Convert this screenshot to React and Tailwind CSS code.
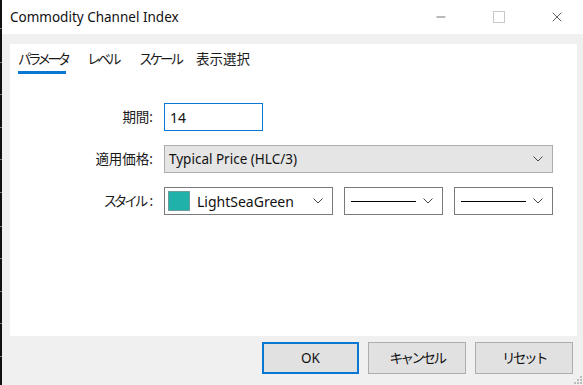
import { X, Minus } from 'lucide-react';

const font = "font-['Noto_Sans','Noto_Sans_CJK_JP',sans-serif]";

function Chevron() {
  return (
    <svg width="10" height="6" viewBox="0 0 10 6" className="shrink-0">
      <path d="M0.5 0.5 L5 5 L9.5 0.5" fill="none" stroke="#444" strokeWidth="1" />
    </svg>
  );
}

function Select({ width, gray, children }) {
  return (
    <div
      className={`h-[28px] ${width} border flex items-center justify-between pr-[9px] ${
        gray ? 'bg-[#e5e5e5] border-[#adadad]' : 'bg-white border-[#7a7a7a]'
      }`}
    >
      <div className="flex items-center min-w-0">{children}</div>
      <Chevron />
    </div>
  );
}

function LineSample() {
  return <div className="ml-[6px] w-[65px] h-px bg-black" />;
}

function Label({ children }) {
  return <div className="text-[13.5px] text-[#1a1a1a] text-right w-[145px] pr-[2px] shrink-0">{children}</div>;
}

const ticks = [28, 62, 94, 127, 159, 192, 226, 258, 291, 323, 356];

export default function App() {
  return (
    <div className={`w-[583px] h-[385px] flex bg-[#f0f0f0] overflow-hidden relative ${font}`}>
      {/* dark edge of the chart behind */}
      <div className="w-[2px] h-full bg-[#111] relative shrink-0">
        {ticks.map(t => (
          <div key={t} className="absolute left-0 w-[2px] h-px bg-[#777]" style={{ top: t }} />
        ))}
      </div>

      <div className="flex-1 flex flex-col">
        {/* Title bar */}
        <div className="h-[34px] bg-white flex items-center shrink-0">
          <div className="pl-[8px] text-[13.5px] text-[#111] flex-1">Commodity Channel Index</div>
          <div className="flex items-center">
            <div className="w-[46px] flex justify-center">
              <Minus className="w-[14px] h-[14px]" strokeWidth={1} color="#111" />
            </div>
            <div className="w-[46px] ml-[12px] flex justify-center">
              <div className="w-[12px] h-[12px] border border-[#c8c8c8]" />
            </div>
            <div className="w-[46px] ml-[12px] mr-[3px] flex justify-center">
              <X className="w-[16px] h-[16px]" strokeWidth={1} color="#111" />
            </div>
          </div>
        </div>

        {/* Body */}
        <div className="flex-1 flex flex-col pt-[10px] pl-[8px] pr-[6px]">
          <div className="h-[292px] bg-white flex flex-col">
            {/* Tabs */}
            <div className="flex pl-[8px] pt-[5px] text-[13.5px] text-[#1a1a1a]">
              <div className="w-[69px] flex flex-col items-start">
                <div className="h-[20px] leading-[20px] tracking-[-3.5px]">パラメータ</div>
                <div className="mt-[2px] w-[48px] h-[3px] bg-[#0a78d2]" />
              </div>
              <div className="w-[52px] h-[20px] leading-[20px] tracking-[-3px]">レベル</div>
              <div className="w-[57px] h-[20px] leading-[20px] tracking-[-3px]">スケール</div>
              <div className="h-[20px] leading-[20px]">表示選択</div>
            </div>

            {/* Form */}
            <div className="flex flex-col gap-[14px] mt-[29px]">
              <div className="flex items-center gap-[9px]">
                <Label>期間:</Label>
                <div className="h-[28px] w-[99px] border border-[#0a78d2] bg-white flex items-center pl-[5px] text-[14px] text-[#111]">
                  14
                </div>
              </div>

              <div className="flex items-center gap-[9px]">
                <Label>適用価格:</Label>
                <Select width="w-[389px]" gray>
                  <span className="pl-[4px] text-[13.5px] text-[#111]">Typical Price (HLC/3)</span>
                </Select>
              </div>

              <div className="flex items-center gap-[9px]">
                <Label>
                  <span className="tracking-[-3px] pr-[4px]">スタイル</span>:
                </Label>
                <div className="flex gap-[11px]">
                  <Select width="w-[169px]">
                    <div className="ml-[3px] w-[22px] h-[20px] bg-[#20b2aa] border border-[#6d9c99]" />
                    <span className="ml-[7px] text-[14px] text-[#111]">LightSeaGreen</span>
                  </Select>
                  <Select width="w-[99px]">
                    <LineSample />
                  </Select>
                  <Select width="w-[99px]">
                    <LineSample />
                  </Select>
                </div>
              </div>
            </div>
          </div>

          {/* Buttons */}
          <div className="flex justify-end gap-[9px] pt-[6px] pr-[4px] text-[13.5px] text-[#111]">
            <button className="w-[97px] h-[32px] bg-[#e1e1e1] border-2 border-[#0a78d2]">OK</button>
            <button className="w-[98px] h-[32px] bg-[#e1e1e1] border border-[#adadad] tracking-[-2.5px]">キャンセル</button>
            <button className="w-[98px] h-[32px] bg-[#e1e1e1] border border-[#adadad] tracking-[-2.5px]">リセット</button>
          </div>
        </div>
      </div>

      {/* resize grip */}
      <div className="absolute right-[1px] bottom-[1px] grid grid-cols-3 gap-[1px]">
        {[0, 0, 1, 0, 1, 1, 1, 1, 1].map((on, i) => (
          <div key={i} className={`w-[2px] h-[2px] ${on ? 'bg-[#bcbcbc]' : ''}`} />
        ))}
      </div>
    </div>
  );
}
